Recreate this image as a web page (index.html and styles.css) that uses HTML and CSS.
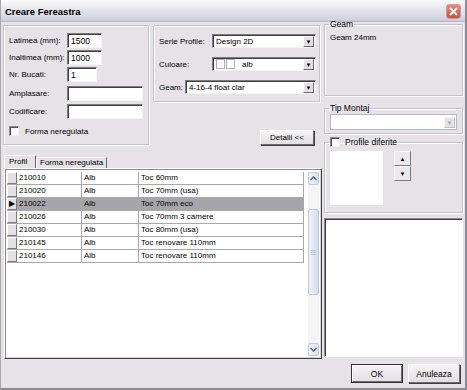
FILE: index.html
```
<!DOCTYPE html>
<html lang="ro">
<head>
  <meta charset="UTF-8">
  <title>Creare Fereastra</title>
  <link rel="stylesheet" href="styles.css">
</head>
<body>
  <div class="window">
    <div class="titlebar">
      <span class="title">Creare Fereastra</span>
      <span class="close">
        <svg width="9" height="9" viewBox="0 0 9 9"><path d="M1 1L8 8M8 1L1 8" stroke="#fff" stroke-width="1.8"/></svg>
      </span>
    </div>

    <div class="main">
      <div class="leftcol">
        <div class="toprow">
          <div class="group dims">
            <div class="frow r1"><label>Latimea (mm):</label><div class="edit w34">1500</div></div>
            <div class="frow r2"><label>Inaltimea (mm):</label><div class="edit w34">1000</div></div>
            <div class="frow r3"><label>Nr. Bucati:</label><div class="edit w29">1</div></div>
            <div class="frow r4"><label>Amplasare:</label><div class="edit w75"></div></div>
            <div class="frow r5"><label>Codificare:</label><div class="edit w75"></div></div>
            <div class="checkrow"><span class="check"></span>Forma neregulata</div>
          </div>
          <div class="midcol">
            <div class="group props">
              <div class="prow p1"><label>Serie Profile:</label><div class="combo c103"><span class="ctext">Design 2D</span><span class="drop">&#9660;</span></div></div>
              <div class="prow p2"><label>Culoare:</label><div class="combo c103"><span class="swatch"></span><span class="swatch"></span><span class="ctext">alb</span><span class="drop">&#9660;</span></div></div>
              <div class="prow p3"><label>Geam:</label><div class="combo c130"><span class="ctext">4-16-4 float clar</span><span class="drop">&#9660;</span></div></div>
            </div>
            <button class="btn detalii">Detalii &lt;&lt;</button>
          </div>
        </div>

        <div class="tabs">
          <span class="tab active">Profil</span>
          <span class="tab">Forma neregulata</span>
        </div>

        <div class="gridbox">
          <div class="rows">
            <div class="row"><span class="rh"></span><span class="cell c1">210010</span><span class="cell c2">Alb</span><span class="cell c3">Toc 60mm</span></div>
            <div class="row"><span class="rh"></span><span class="cell c1">210020</span><span class="cell c2">Alb</span><span class="cell c3">Toc 70mm (usa)</span></div>
            <div class="row sel"><span class="rh">&#9654;</span><span class="cell c1">210022</span><span class="cell c2">Alb</span><span class="cell c3">Toc 70mm eco</span></div>
            <div class="row"><span class="rh"></span><span class="cell c1">210026</span><span class="cell c2">Alb</span><span class="cell c3">Toc 70mm 3 camere</span></div>
            <div class="row"><span class="rh"></span><span class="cell c1">210030</span><span class="cell c2">Alb</span><span class="cell c3">Toc 80mm (usa)</span></div>
            <div class="row"><span class="rh"></span><span class="cell c1">210145</span><span class="cell c2">Alb</span><span class="cell c3">Toc renovare 110mm</span></div>
            <div class="row"><span class="rh"></span><span class="cell c1">210146</span><span class="cell c2">Alb</span><span class="cell c3">Toc renovare 110mm</span></div>
          </div>
          <div class="vscroll">
            <span class="sbtn"><svg width="7" height="5" viewBox="0 0 7 5"><path d="M0.5 4L3.5 1L6.5 4" fill="none" stroke="#4d6185" stroke-width="1.5"/></svg></span>
            <span class="track1"></span>
            <span class="thumb"><i></i><i></i><i></i></span>
            <span class="track2"></span>
            <span class="sbtn"><svg width="7" height="5" viewBox="0 0 7 5"><path d="M0.5 1L3.5 4L6.5 1" fill="none" stroke="#4d6185" stroke-width="1.5"/></svg></span>
          </div>
        </div>
      </div>

      <div class="rightcol">
        <fieldset class="fs geam">
          <legend>Geam</legend>
          <div class="geamtext">Geam 24mm</div>
        </fieldset>
        <fieldset class="fs montaj">
          <legend>Tip Montaj</legend>
          <div class="combo c126 disabled"><span class="ctext"></span><span class="drop">&#9660;</span></div>
        </fieldset>
        <fieldset class="fs diferite">
          <legend><span class="check"></span>Profile diferite</legend>
          <div class="difbody">
            <div class="listbox"></div>
            <div class="spin">
              <span class="spinbtn">&#9650;</span>
              <span class="spinbtn">&#9660;</span>
            </div>
          </div>
        </fieldset>
        <div class="bigbox"></div>
      </div>
    </div>

    <div class="buttons">
      <button class="btn ok">OK</button>
      <button class="btn">Anuleaza</button>
    </div>
  </div>
</body>
</html>
```
FILE: styles.css
```
* {
  box-sizing: border-box;
}

body {
  margin: 0;
  font-family: "Liberation Sans", Arial, sans-serif;
  font-size: 8px;
  color: #000;
}

.window {
  width: 467px;
  height: 390px;
  background: #e6e2e8;
  border-left: 1px solid #a8a6b0;
  border-right: 2px solid #8c8a94;
  border-bottom: 2px solid #8c8a94;
}

.titlebar {
  height: 22px;
  display: flex;
  align-items: center;
  justify-content: space-between;
  padding: 0 4px 0 4px;
  background: linear-gradient(#fbfbfd, #e4e4ec 45%, #d2d2de 90%, #b4b4c2);
}

.title {
  font-weight: bold;
  font-size: 9.5px;
}

.close {
  width: 15px;
  height: 15px;
  border-radius: 3px;
  border: 1px solid #c4a0a0;
  background: linear-gradient(#e88a7c, #cf4e44);
  display: flex;
  align-items: center;
  justify-content: center;
}

.main {
  display: flex;
  padding: 0 2px 0 2px;
  height: 339px;
}

.leftcol {
  width: 322px;
}

.toprow {
  display: flex;
  margin-top: 3px;
}

.group {
  border: 1px solid #c6c2cc;
  box-shadow: inset 1px 1px 0 #fff, 1px 1px 0 #fff;
}

.dims {
  width: 146px;
  height: 120px;
  padding: 0 0 0 5px;
}

.frow {
  display: flex;
  align-items: center;
  height: 15px;
}

.frow label {
  width: 58px;
}

.r1 { margin-top: 7px; }
.r2 { margin-top: 2px; }
.r3 { margin-top: 2px; }
.r4 { margin-top: 4px; }
.r5 { margin-top: 3px; }

.edit {
  height: 15px;
  background: #fff;
  border: 1px solid;
  border-color: #7c7c80 #f4f4f4 #f4f4f4 #7c7c80;
  box-shadow: inset 1px 1px 0 #404040;
  padding: 2px 0 0 3px;
  font-size: 8.5px;
}

.w34 { width: 35px; }
.w29 { width: 30px; }
.w75 { width: 76px; }

.checkrow {
  display: flex;
  align-items: center;
  margin-top: 7px;
}

.check {
  display: inline-block;
  width: 10px;
  height: 10px;
  background: #fff;
  border: 1px solid;
  border-color: #8a8a8a #f0f0f0 #f0f0f0 #8a8a8a;
  box-shadow: inset 1px 1px 0 #505050;
  margin-right: 6px;
}

.midcol {
  display: flex;
  flex-direction: column;
  margin-left: 4px;
}

.props {
  width: 167px;
  height: 77px;
  padding: 0 0 0 5px;
}

.prow {
  display: flex;
  align-items: center;
  height: 14px;
}

.p1 label { width: 53px; }
.p2 label { width: 53px; }
.p3 label { width: 26px; }

.p1 { margin-top: 8px; }
.p2 { margin-top: 9px; }
.p3 { margin-top: 9px; }

.combo {
  height: 14px;
  display: flex;
  align-items: center;
  background: #fff;
  border: 1px solid;
  border-color: #7c7c80 #f4f4f4 #f4f4f4 #7c7c80;
  box-shadow: inset 1px 1px 0 #404040;
  padding-left: 3px;
}

.c103 { width: 104px; }
.c130 { width: 131px; }
.c126 { width: 127px; height: 16px; }

.ctext {
  flex: 1;
}

.swatch {
  width: 9px;
  height: 10px;
  border: 1px solid #b0b0b0;
  margin-right: 1px;
}

.swatch + .ctext {
  margin-left: 6px;
}

.drop {
  width: 11px;
  height: 11px;
  margin-right: 1px;
  background: #e4e0e6;
  border: 1px solid;
  border-color: #fff #6a6a6a #6a6a6a #fff;
  font-size: 6px;
  display: flex;
  align-items: center;
  justify-content: center;
  padding-top: 1px;
}

.disabled {
  border-color: #b8b8c4;
  box-shadow: none;
}

.disabled .drop {
  color: #a8a8a8;
  border-color: #f8f8f8 #c0c0c8 #c0c0c8 #f8f8f8;
}

.btn {
  font-family: "Liberation Sans", Arial, sans-serif;
  font-size: 8px;
  background: linear-gradient(#f6f4f6, #e2dee4);
  border: 1px solid;
  border-color: #fff #6a6a70 #6a6a70 #fff;
  box-shadow: 1px 1px 0 #404040;
  padding: 0;
  color: #000;
}

.detalii {
  width: 54px;
  height: 15px;
  margin-top: 28px;
  margin-left: 107px;
}

.tabs {
  display: flex;
  align-items: flex-end;
  height: 13px;
  margin-top: 10px;
  padding-left: 1px;
}

.tab {
  height: 11px;
  padding: 0 3px;
  border-left: 1px solid #fff;
  border-top: 1px solid #fff;
  border-right: 1px solid #606066;
  line-height: 10px;
}

.tab.active {
  height: 13px;
  width: 32px;
  padding-left: 4px;
  line-height: 12px;
}

.gridbox {
  width: 318px;
  height: 191px;
  margin-left: 1px;
  background: #fff;
  border: 1px solid;
  border-color: #fff #404040 #404040 #fff;
  box-shadow: inset 1px 1px 0 #8a8a90, inset -1px -1px 0 #d8d4dc;
  display: flex;
  padding: 3px 2px 2px 2px;
}

.rows {
  width: 297px;
}

.row {
  display: flex;
  height: 13px;
  border-bottom: 1px solid #a8a8a8;
}

.rh {
  width: 10px;
  background: #e4e0e6;
  border: 1px solid;
  border-color: #fff #7a7a7a #7a7a7a #fff;
  font-size: 8px;
  line-height: 10px;
  padding-left: 1px;
}

.cell {
  padding-left: 2px;
  line-height: 12px;
  border-right: 1px solid #a8a8a8;
}

.c1 { width: 65px; }
.c2 { width: 57px; }
.c3 { width: 165px; }

.sel .cell {
  background: #a6a6aa;
}

.vscroll {
  width: 15px;
  margin-left: 4px;
  display: flex;
  flex-direction: column;
  background: #f5f5f8;
}

.sbtn {
  height: 13px;
  border: 1px solid #c2cad8;
  border-radius: 2px;
  background: linear-gradient(90deg, #f4f6fc, #d8e0ee);
  display: flex;
  align-items: center;
  justify-content: center;
}

.track1 {
  height: 24px;
}

.thumb {
  height: 86px;
  border: 1px solid #bcc6d8;
  border-radius: 2px;
  background: linear-gradient(90deg, #f0f2fa, #d6dcec);
  display: flex;
  flex-direction: column;
  align-items: center;
  justify-content: center;
  gap: 1px;
}

.thumb i {
  width: 5px;
  height: 1px;
  background: #b8c0d4;
}

.track2 {
  flex: 1;
}

.rightcol {
  width: 139px;
  margin-left: 2px;
  display: flex;
  flex-direction: column;
}

.fs {
  border: 1px solid #c6c2cc;
  box-shadow: inset 1px 1px 0 #fff, 1px 1px 0 #fff;
  margin: 0;
  padding: 0 5px;
}

.fs legend {
  padding: 0 1px;
  margin-left: -1px;
  display: flex;
  align-items: center;
  font-size: 8.5px;
}

.geam {
  height: 77px;
  margin-top: -3px;
}

.geamtext {
  margin-top: 4px;
}

.montaj {
  height: 31px;
  margin-top: 7px;
  padding-top: 1px;
}

.diferite {
  height: 76px;
  margin-top: 3px;
  padding-top: 1px;
}

.diferite .check {
  margin-right: 5px;
}

.difbody {
  display: flex;
  padding-top: 3px;
}

.listbox {
  width: 53px;
  height: 54px;
  background: #fff;
}

.spin {
  display: flex;
  flex-direction: column;
  margin-left: 11px;
}

.spinbtn {
  width: 17px;
  height: 15px;
  background: #ece8ee;
  border: 1px solid;
  border-color: #fff #7a7a80 #7a7a80 #fff;
  font-size: 6px;
  display: flex;
  align-items: center;
  justify-content: center;
}

.bigbox {
  height: 139px;
  margin-top: 5px;
  background: #fff;
  border: 1px solid;
  border-color: #8a8a90 #fff #fff #8a8a90;
  box-shadow: inset 1px 1px 0 #404040;
}

.buttons {
  display: flex;
  justify-content: flex-end;
  gap: 5px;
  padding: 3px 5px 0 0;
}

.buttons .btn {
  width: 52px;
  height: 19px;
  font-size: 8.5px;
}

.buttons .ok {
  border: 1px solid #303030;
  box-shadow: inset 1px 1px 0 #fff, inset -1px -1px 0 #707070;
}
```
